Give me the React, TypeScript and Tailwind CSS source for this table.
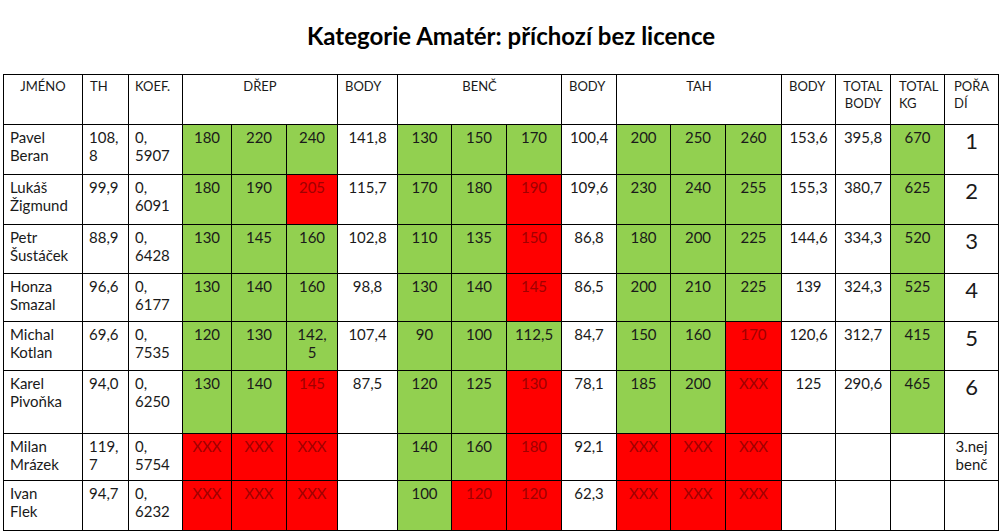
import type { ReactNode } from "react";

type Cell = { v: ReactNode; c?: "g" | "r" };

const g = (v: ReactNode): Cell => ({ v, c: "g" });
const r = (v: ReactNode): Cell => ({ v, c: "r" });
const w = (v: ReactNode): Cell => ({ v });

type Row = {
  name: [string, string];
  th: ReactNode;
  koef: ReactNode;
  drep: Cell[];
  body1: string;
  benc: Cell[];
  body2: string;
  tah: Cell[];
  body3: string;
  total: string;
  kg: Cell;
  poradi: ReactNode;
  h: string;
};

const rows: Row[] = [
  { name: ["Pavel", "Beran"], th: <>108,<br />8</>, koef: <>0,<br />5907</>, drep: [g("180"), g("220"), g("240")], body1: "141,8", benc: [g("130"), g("150"), g("170")], body2: "100,4", tah: [g("200"), g("250"), g("260")], body3: "153,6", total: "395,8", kg: g("670"), poradi: "1", h: "h-[50px]" },
  { name: ["Lukáš", "Žigmund"], th: "99,9", koef: <>0,<br />6091</>, drep: [g("180"), g("190"), r("205")], body1: "115,7", benc: [g("170"), g("180"), r("190")], body2: "109,6", tah: [g("230"), g("240"), g("255")], body3: "155,3", total: "380,7", kg: g("625"), poradi: "2", h: "h-[50px]" },
  { name: ["Petr", "Šustáček"], th: "88,9", koef: <>0,<br />6428</>, drep: [g("130"), g("145"), g("160")], body1: "102,8", benc: [g("110"), g("135"), r("150")], body2: "86,8", tah: [g("180"), g("200"), g("225")], body3: "144,6", total: "334,3", kg: g("520"), poradi: "3", h: "h-[49px]" },
  { name: ["Honza", "Smazal"], th: "96,6", koef: <>0,<br />6177</>, drep: [g("130"), g("140"), g("160")], body1: "98,8", benc: [g("130"), g("140"), r("145")], body2: "86,5", tah: [g("200"), g("210"), g("225")], body3: "139", total: "324,3", kg: g("525"), poradi: "4", h: "h-[48px]" },
  { name: ["Michal", "Kotlan"], th: "69,6", koef: <>0,<br />7535</>, drep: [g("120"), g("130"), g(<>142,<br />5</>)], body1: "107,4", benc: [g("90"), g("100"), g("112,5")], body2: "84,7", tah: [g("150"), g("160"), r("170")], body3: "120,6", total: "312,7", kg: g("415"), poradi: "5", h: "h-[49px]" },
  { name: ["Karel", "Pivoňka"], th: "94,0", koef: <>0,<br />6250</>, drep: [g("130"), g("140"), r("145")], body1: "87,5", benc: [g("120"), g("125"), r("130")], body2: "78,1", tah: [g("185"), g("200"), r("XXX")], body3: "125", total: "290,6", kg: g("465"), poradi: "6", h: "h-[63px]" },
  { name: ["Milan", "Mrázek"], th: <>119,<br />7</>, koef: <>0,<br />5754</>, drep: [r("XXX"), r("XXX"), r("XXX")], body1: "", benc: [g("140"), g("160"), r("180")], body2: "92,1", tah: [r("XXX"), r("XXX"), r("XXX")], body3: "", total: "", kg: w(""), poradi: <span className="block pt-[1px] text-[15px] leading-[18px]">3.nej<br />benč</span>, h: "h-[47px]" },
  { name: ["Ivan", "Flek"], th: "94,7", koef: <>0,<br />6232</>, drep: [r("XXX"), r("XXX"), r("XXX")], body1: "", benc: [g("100"), r("120"), r("120")], body2: "62,3", tah: [r("XXX"), r("XXX"), r("XXX")], body3: "", total: "", kg: w(""), poradi: "", h: "h-[50px]" },
];

const td = "border border-black align-top px-[6px] pt-[3px] text-[15px] leading-[18px]";
const th = "border border-black align-top font-normal pt-[3px] text-[13px] leading-[17px] uppercase";

function Colored({ cell }: { cell: Cell }) {
  const bg = cell.c === "g" ? "bg-[#92d050] text-[#1a1a1a]" : cell.c === "r" ? "bg-[#ff0000] text-[#a00000]" : "bg-white";
  return <td className={`${td} ${bg} text-center`}>{cell.v}</td>;
}

export default function App() {
  const widths = [79, 46, 54, 49, 55, 51, 60, 54, 55, 55, 55, 54, 55, 56, 54, 55, 54, 54];
  return (
    <div className="w-[1000px] h-[531px] bg-white text-[#1a1a1a] overflow-hidden" style={{ fontFamily: "Lato, 'Open Sans', sans-serif" }}>
      <h1 className="h-[74px] pt-[21px] pl-[22px] text-center text-[24px] font-bold leading-[30px] text-black">
        Kategorie Amatér: příchozí bez licence
      </h1>
      <table className="ml-[3px] table-fixed border-collapse w-[995px]">
        <colgroup>
          {widths.map((wd, i) => (
            <col key={i} style={{ width: wd }} />
          ))}
        </colgroup>
        <thead>
          <tr className="h-[50px]">
            <th className={`${th} text-center`}>JMÉNO</th>
            <th className={`${th} text-left pl-[7px]`}>TH</th>
            <th className={`${th} text-left pl-[6px]`}>KOEF.</th>
            <th colSpan={3} className={`${th} text-center`}>DŘEP</th>
            <th className={`${th} text-left pl-[7px]`}>BODY</th>
            <th colSpan={3} className={`${th} text-center`}>BENČ</th>
            <th className={`${th} text-left pl-[7px]`}>BODY</th>
            <th colSpan={3} className={`${th} text-center`}>TAH</th>
            <th className={`${th} text-left pl-[7px]`}>BODY</th>
            <th className={`${th} text-center`}>TOTAL<br />BODY</th>
            <th className={`${th} text-left pl-[8px]`}>TOTAL<br />KG</th>
            <th className={`${th} text-left pl-[9px]`}>POŘA<br />DÍ</th>
          </tr>
        </thead>
        <tbody>
          {rows.map((row) => (
            <tr key={row.name[0]} className={row.h}>
              <td className={`${td} text-left`}>{row.name[0]}<br />{row.name[1]}</td>
              <td className={`${td} text-left`}>{row.th}</td>
              <td className={`${td} text-left`}>{row.koef}</td>
              {row.drep.map((c, i) => <Colored key={`d${i}`} cell={c} />)}
              <td className={`${td} text-center`}>{row.body1}</td>
              {row.benc.map((c, i) => <Colored key={`b${i}`} cell={c} />)}
              <td className={`${td} text-center`}>{row.body2}</td>
              {row.tah.map((c, i) => <Colored key={`t${i}`} cell={c} />)}
              <td className={`${td} text-center`}>{row.body3}</td>
              <td className={`${td} text-center`}>{row.total}</td>
              <Colored cell={row.kg} />
              <td className="border border-black text-center align-top pt-[2px] text-[22px] leading-[28px]">{row.poradi}</td>
            </tr>
          ))}
        </tbody>
      </table>
    </div>
  );
}
